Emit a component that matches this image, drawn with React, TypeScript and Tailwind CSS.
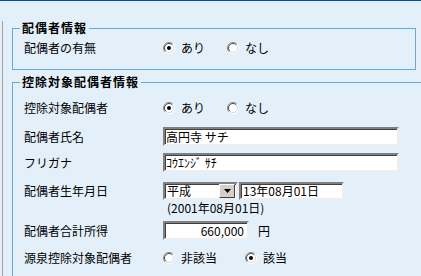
import { ReactNode } from "react";

const font = { fontFamily: '"Noto Sans CJK JP", "Noto Sans", sans-serif' };

function Radio({ checked }: { checked?: boolean }) {
  return (
    <svg width="12" height="12" viewBox="0 0 12 12" className="shrink-0">
      <circle cx="6" cy="6" r="5" fill="#fff" />
      <path d="M2.1 9.9 A5.5 5.5 0 0 1 9.9 2.1" fill="none" stroke="#8a8a8a" strokeWidth="1" />
      <path d="M2.8 9.2 A4.5 4.5 0 0 1 9.2 2.8" fill="none" stroke="#4a4a4a" strokeWidth="1" />
      <path d="M9.9 2.1 A5.5 5.5 0 0 1 2.1 9.9" fill="none" stroke="#ffffff" strokeWidth="1" />
      <path d="M9.2 2.8 A4.5 4.5 0 0 1 2.8 9.2" fill="none" stroke="#d8d8d8" strokeWidth="1" />
      {checked && <circle cx="6" cy="6" r="2" fill="#000" />}
    </svg>
  );
}

function RadioItem({ label, checked, width }: { label: string; checked?: boolean; width: string }) {
  return (
    <div className={`flex items-center ${width}`}>
      <Radio checked={checked} />
      <span className="ml-[6px]">{label}</span>
    </div>
  );
}

function Row({ label, className, children }: { label: string; className: string; children: ReactNode }) {
  return (
    <div className={`flex items-center ${className}`}>
      <span className="w-[143px] pl-[4px]">{label}</span>
      {children}
    </div>
  );
}

const sunken =
  "border-2 border-t-[#808080] border-l-[#808080] border-r-[#eeeeee] border-b-[#eeeeee] bg-white shadow-[inset_1px_1px_0_#404040]";

export default function App() {
  return (
    <div
      className="w-[421px] h-[276px] overflow-hidden bg-[#e4f0f9] border-t border-[#0b49a8] text-[12px] leading-[14px] text-black"
      style={font}
    >
      <div className="ml-[2px] h-full border-l border-[#a3a3a3] pl-[9px]">
        <fieldset className="mt-[20px] w-[404px] border border-[#64a9da] px-[7px] pb-[8px]">
          <legend className="px-[2px] font-bold tracking-[1px]">配偶者情報</legend>
          <Row label="配偶者の有無" className="h-[26px]">
            <RadioItem label="あり" checked width="w-[64px]" />
            <RadioItem label="なし" width="w-[64px]" />
          </Row>
        </fieldset>

        <fieldset className="mt-[5px] w-[420px] border border-[#64a9da] px-[7px] pt-[7px] pb-[8px]">
          <legend className="px-[2px] font-bold tracking-[1px]">控除対象配偶者情報</legend>
          <Row label="控除対象配偶者" className="h-[24px]">
            <RadioItem label="あり" checked width="w-[64px]" />
            <RadioItem label="なし" width="w-[64px]" />
          </Row>
          <Row label="配偶者氏名" className="mt-[7px] h-[19px]">
            <div className={`${sunken} h-[19px] w-[236px] flex items-center pl-[1px]`}>高円寺 サチ</div>
          </Row>
          <Row label="フリガナ" className="mt-[7px] h-[19px]">
            <div className={`${sunken} h-[19px] w-[236px] flex items-center pl-[1px]`}>ｺｳｴﾝｼﾞ ｻﾁ</div>
          </Row>
          <Row label="配偶者生年月日" className="mt-[10px] h-[18px]">
            <div className={`${sunken} h-[18px] w-[75px] flex items-center justify-between pl-[2px] pr-[1px]`}>
              <span>平成</span>
              <span className="flex h-[14px] w-[16px] items-center justify-center border border-t-white border-l-white border-r-[#404040] border-b-[#404040] bg-[#d4d0c8]">
                <svg width="7" height="4" viewBox="0 0 7 4">
                  <path d="M0 0 H7 L3.5 4 Z" fill="#000" />
                </svg>
              </span>
            </div>
            <div className={`${sunken} ml-[1px] h-[18px] w-[105px] flex items-center pl-[2px]`}>13年08月01日</div>
          </Row>
          <div className="mt-[1px] flex h-[14px] items-center pl-[147px]">(2001年08月01日)</div>
          <Row label="配偶者合計所得" className="mt-[6px] h-[19px]">
            <div className={`${sunken} h-[19px] w-[86px] flex items-center justify-end pr-[3px]`}>660,000</div>
            <span className="ml-[9px]">円</span>
          </Row>
          <Row label="源泉控除対象配偶者" className="mt-[8px] h-[20px]">
            <RadioItem label="非該当" width="w-[82px]" />
            <RadioItem label="該当" checked width="w-[64px]" />
          </Row>
        </fieldset>
      </div>
    </div>
  );
}
